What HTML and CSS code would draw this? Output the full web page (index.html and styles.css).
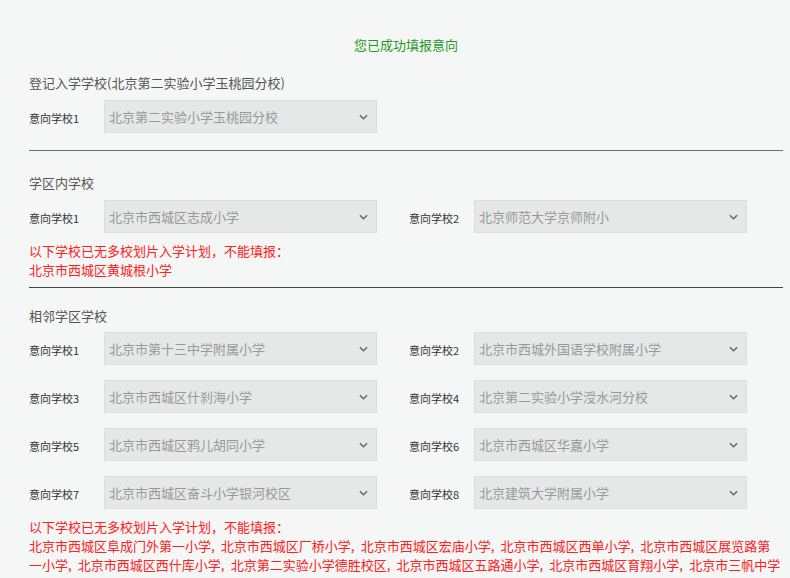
FILE: index.html
```html
<!DOCTYPE html>
<html lang="zh-CN">
<head>
<meta charset="utf-8">
<title>意向填报</title>
<link rel="stylesheet" href="styles.css">
</head>
<body>
<div class="page">
  <div class="success">您已成功填报意向</div>

  <section class="sec sec-first">
    <div class="sec-title">登记入学学校(北京第二实验小学玉桃园分校)</div>
    <div class="grid">
      <div class="field">
        <span class="label">意向学校1</span>
        <div class="select">北京第二实验小学玉桃园分校<svg class="chev" viewBox="0 0 10 6" width="9" height="6"><path d="M1 1l4 4 4-4" fill="none" stroke="#666" stroke-width="1.6"/></svg></div>
      </div>
    </div>
  </section>

  <hr class="rule rule-a">

  <section class="sec sec-second">
    <div class="sec-title">学区内学校</div>
    <div class="grid">
      <div class="field">
        <span class="label">意向学校1</span>
        <div class="select">北京市西城区志成小学<svg class="chev" viewBox="0 0 10 6" width="9" height="6"><path d="M1 1l4 4 4-4" fill="none" stroke="#666" stroke-width="1.6"/></svg></div>
      </div>
      <div class="field field-r">
        <span class="label">意向学校2</span>
        <div class="select">北京师范大学京师附小<svg class="chev" viewBox="0 0 10 6" width="9" height="6"><path d="M1 1l4 4 4-4" fill="none" stroke="#666" stroke-width="1.6"/></svg></div>
      </div>
    </div>
    <div class="warn">以下学校已无多校划片入学计划，不能填报：<br>北京市西城区黄城根小学</div>
  </section>

  <hr class="rule rule-b">

  <section class="sec sec-third">
    <div class="sec-title">相邻学区学校</div>
    <div class="grid">
      <div class="field">
        <span class="label">意向学校1</span>
        <div class="select">北京市第十三中学附属小学<svg class="chev" viewBox="0 0 10 6" width="9" height="6"><path d="M1 1l4 4 4-4" fill="none" stroke="#666" stroke-width="1.6"/></svg></div>
      </div>
      <div class="field field-r">
        <span class="label">意向学校2</span>
        <div class="select">北京市西城外国语学校附属小学<svg class="chev" viewBox="0 0 10 6" width="9" height="6"><path d="M1 1l4 4 4-4" fill="none" stroke="#666" stroke-width="1.6"/></svg></div>
      </div>
      <div class="field">
        <span class="label">意向学校3</span>
        <div class="select">北京市西城区什刹海小学<svg class="chev" viewBox="0 0 10 6" width="9" height="6"><path d="M1 1l4 4 4-4" fill="none" stroke="#666" stroke-width="1.6"/></svg></div>
      </div>
      <div class="field field-r">
        <span class="label">意向学校4</span>
        <div class="select">北京第二实验小学涭水河分校<svg class="chev" viewBox="0 0 10 6" width="9" height="6"><path d="M1 1l4 4 4-4" fill="none" stroke="#666" stroke-width="1.6"/></svg></div>
      </div>
      <div class="field">
        <span class="label">意向学校5</span>
        <div class="select">北京市西城区鸦儿胡同小学<svg class="chev" viewBox="0 0 10 6" width="9" height="6"><path d="M1 1l4 4 4-4" fill="none" stroke="#666" stroke-width="1.6"/></svg></div>
      </div>
      <div class="field field-r">
        <span class="label">意向学校6</span>
        <div class="select">北京市西城区华嘉小学<svg class="chev" viewBox="0 0 10 6" width="9" height="6"><path d="M1 1l4 4 4-4" fill="none" stroke="#666" stroke-width="1.6"/></svg></div>
      </div>
      <div class="field">
        <span class="label">意向学校7</span>
        <div class="select">北京市西城区奋斗小学银河校区<svg class="chev" viewBox="0 0 10 6" width="9" height="6"><path d="M1 1l4 4 4-4" fill="none" stroke="#666" stroke-width="1.6"/></svg></div>
      </div>
      <div class="field field-r">
        <span class="label">意向学校8</span>
        <div class="select">北京建筑大学附属小学<svg class="chev" viewBox="0 0 10 6" width="9" height="6"><path d="M1 1l4 4 4-4" fill="none" stroke="#666" stroke-width="1.6"/></svg></div>
      </div>
    </div>
    <div class="warn warn-list">以下学校已无多校划片入学计划，不能填报：<br>北京市西城区阜成门外第一小学, 北京市西城区厂桥小学, 北京市西城区宏庙小学, 北京市西城区西单小学, 北京市西城区展览路第一小学, 北京市西城区西什库小学, 北京第二实验小学德胜校区, 北京市西城区五路通小学, 北京市西城区育翔小学, 北京市三帆中学附属小学</div>
  </section>
</div>
</body>
</html>
```

FILE: styles.css
```css
html, body {
  margin: 0;
  padding: 0;
  background: #f5f6f6;
}

body {
  font-family: "Noto Sans CJK SC", "Noto Sans", "Liberation Sans", sans-serif;
  color: #555;
  overflow: hidden;
  height: 578px;
}

.page {
  width: 754px;
  padding: 37px 0 0 29px;
}

.success {
  text-align: center;
  color: #1f9a1f;
  font-size: 13px;
  line-height: 16px;
}

.sec-title {
  font-size: 13px;
  line-height: 20px;
  color: #555;
}

.sec-first {
  margin-top: 20px;
}

.sec-second {
  margin-top: 22px;
}

.sec-third {
  margin-top: 18px;
}

.grid {
  display: grid;
  grid-template-columns: 348px 338px;
  column-gap: 32px;
  row-gap: 15px;
  margin-top: 7px;
}

.sec-third .grid {
  margin-top: 6px;
}

.field {
  display: flex;
  align-items: center;
}

.label {
  width: 75px;
  flex: none;
  font-size: 11px;
  color: #333;
  padding-top: 3px;
}

.field-r .label {
  width: 65px;
}

.select {
  width: 273px;
  height: 33px;
  box-sizing: border-box;
  display: flex;
  align-items: center;
  justify-content: space-between;
  padding: 0 8px 0 4px;
  background: #e6e7e7;
  border: 1px solid #dcdddd;
  font-size: 13px;
  color: #999;
}

.chev {
  flex: none;
  margin-top: 1px;
}

.rule {
  margin: 0;
  border: 0;
  height: 0;
  width: 754px;
}

.rule-a {
  margin-top: 17px;
  border-top: 1px solid #6e6e6e;
}

.rule-b {
  margin-top: 8px;
  border-top: 1px solid #444;
}

.warn {
  margin-top: 8px;
  font-size: 13px;
  line-height: 19px;
  color: #ff2020;
}

.warn-list {
  word-spacing: 3.3px;
}
```
